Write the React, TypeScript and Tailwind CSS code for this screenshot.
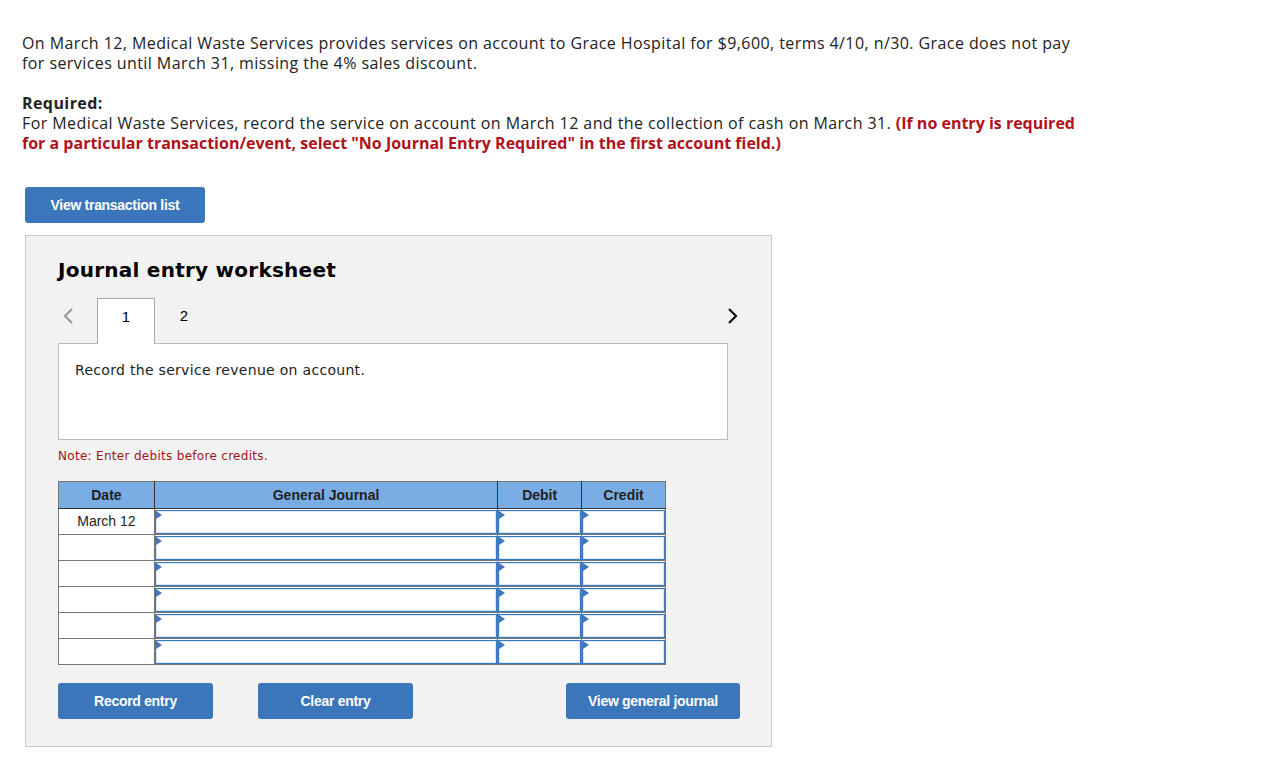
import React from "react";

const rows = ["March 12", "", "", "", "", ""];

const InputCell = () => (
  <div className="relative h-[24px] border border-[#3b78bd] bg-white shadow-[inset_0_0_0_1px_#dbe8f7]">
    {/* little marker in the corner */}
    <span className="absolute left-0 top-0 h-0 w-0 border-y-[4px] border-l-[6px] border-y-transparent border-l-[#3b78bd]" />
  </div>
);

const BlueButton = ({ label, className }: { label: string; className: string }) => (
  <button
    className={`h-[36px] rounded-[3px] bg-[#3a76b9] text-[14px] font-bold tracking-[-0.3px] text-white ${className}`}
    style={{ fontFamily: "'Liberation Sans', Arial, sans-serif" }}
  >
    {label}
  </button>
);

export default function App() {
  return (
    <div className="min-h-screen bg-white px-[22px] pt-[33px] text-[#222]">
      <div
        className="text-[16px] leading-[20px] tracking-[0.42px] text-[#222]"
        style={{ fontFamily: "'Open Sans', Arial, sans-serif" }}
      >
        <p>
          On March 12, Medical Waste Services provides services on account to Grace Hospital for $9,600, terms 4/10, n/30. Grace does not pay
          <br />
          for services until March 31, missing the 4% sales discount.
        </p>
        <p className="mt-[20px] font-bold">Required:</p>
        <p>
          For Medical Waste Services, record the service on account on March 12 and the collection of cash on March 31.{" "}
          <span className="font-bold tracking-[0px] text-[#b0121b]">(If no entry is required</span>
          <br />
          <span className="font-bold tracking-[0px] text-[#b0121b]">
            for a particular transaction/event, select "No Journal Entry Required" in the first account field.)
          </span>
        </p>
      </div>

      <div className="ml-[3px] mt-[34px]">
        <BlueButton label="View transaction list" className="w-[180px]" />
      </div>

      <div className="ml-[3px] mt-[12px] w-[747px] border border-[#c8c8c8] bg-[#f2f2f2] pb-[27px] pl-[32px] pr-[31px] pt-[22px]">
        <h2
          className="text-[20px] font-bold leading-[24px] tracking-[0.25px] text-black"
          style={{ fontFamily: "'DejaVu Sans', Verdana, sans-serif" }}
        >
          Journal entry worksheet
        </h2>

        <div className="mt-[15px] flex w-[684px] items-end" style={{ fontFamily: "Arial, 'Liberation Sans', sans-serif" }}>
          <div className="flex h-[46px] w-[39px] items-center pb-[8px] pl-[4px]">
            <svg width="12" height="18" viewBox="0 0 12 18">
              <path d="M10 2 L3 9 L10 16" fill="none" stroke="#999" strokeWidth="2.2" />
            </svg>
          </div>
          <div className="relative z-10 -mb-px flex h-[46px] w-[58px] items-center justify-center border border-b-0 border-[#aaa] bg-white pb-[8px] text-[15px] text-black">
            1
          </div>
          <div className="flex h-[46px] w-[58px] items-center justify-center pb-[8px] text-[15px] text-black">2</div>
          <div className="flex-1" />
          <div className="flex h-[46px] items-center pb-[8px] pr-[3px]">
            <svg width="12" height="18" viewBox="0 0 12 18">
              <path d="M2 2 L9 9 L2 16" fill="none" stroke="#111" strokeWidth="2.2" />
            </svg>
          </div>
        </div>

        <div
          className="h-[97px] w-[670px] border border-[#bbb] bg-white pl-[16px] pt-[16px] text-[14px] tracking-[0.3px] text-[#222]"
          style={{ fontFamily: "'DejaVu Sans', Verdana, sans-serif" }}
        >
          Record the service revenue on account.
        </div>

        <p
          className="mt-[8px] text-[12px] leading-[16px] tracking-[0.3px] text-[#a3141c]"
          style={{ fontFamily: "'DejaVu Sans', Verdana, sans-serif" }}
        >
          Note: Enter debits before credits.
        </p>

        <table
          className="mt-[17px] w-[608px] border-collapse text-[14px]"
          style={{ fontFamily: "'Liberation Sans', Arial, sans-serif" }}
        >
          <thead>
            <tr className="h-[27px] bg-[#7aade4] font-bold text-[#222]">
              <th className="w-[96px] border border-[#777] border-b-[#333] border-r-[#333] font-bold">Date</th>
              <th className="w-[344px] border border-[#777] border-b-[#333] border-r-[#333] font-bold">General Journal</th>
              <th className="w-[84px] border border-[#777] border-b-[#333] border-r-[#333] font-bold">Debit</th>
              <th className="w-[84px] border border-[#777] border-b-[#333] font-bold">Credit</th>
            </tr>
          </thead>
          <tbody>
            {rows.map((d, i) => (
              <tr key={i} className="h-[26px] bg-white">
                <td className="border border-[#777] text-center text-[#222]">{d}</td>
                <td className="border border-[#777] p-0">
                  <InputCell />
                </td>
                <td className="border border-[#777] p-0">
                  <InputCell />
                </td>
                <td className="border border-[#777] p-0">
                  <InputCell />
                </td>
              </tr>
            ))}
          </tbody>
        </table>

        <div className="mt-[18px] flex w-[682px] items-center">
          <BlueButton label="Record entry" className="w-[155px]" />
          <BlueButton label="Clear entry" className="ml-[45px] w-[155px]" />
          <div className="flex-1" />
          <BlueButton label="View general journal" className="w-[174px]" />
        </div>
      </div>
    </div>
  );
}
